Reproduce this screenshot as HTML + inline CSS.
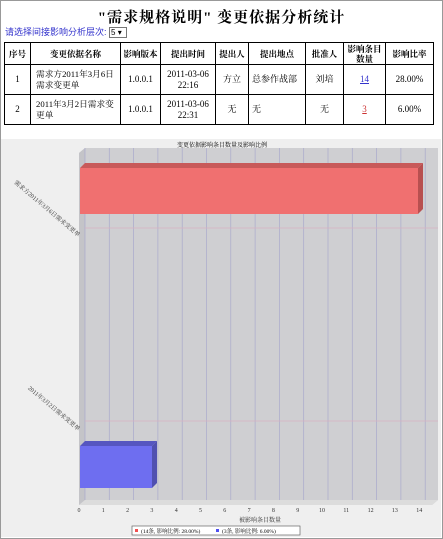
<!DOCTYPE html>
<html><head><meta charset="utf-8"><style>
body{margin:0;width:443px;height:539px;overflow:hidden;background:#fff;font-family:"Liberation Serif","Noto Serif CJK SC",serif;}
.frame{position:absolute;left:0;top:0;width:441px;height:537px;border:1px solid #999;}
h1{position:absolute;top:6px;left:0;width:443px;text-align:center;font-size:15px;font-weight:bold;margin:0;letter-spacing:1px}
.sel{position:absolute;left:5px;top:25px;font-size:9px;color:#3333cc;font-family:"Liberation Sans","Noto Sans CJK SC",sans-serif}
.sel span{display:inline-block;border:1px solid #777;color:#000;font-size:8px;padding:0 1px;width:14px;height:9px;line-height:9px;vertical-align:middle;background:#fff}
table{position:absolute;left:4px;top:42px;border-collapse:collapse;font-size:9px;table-layout:fixed;width:429px}
td{border:1px solid #000;text-align:center;padding:0 3px;line-height:11px}
th{border:1px solid #000;font-size:8.5px;height:21px;line-height:10px;padding:0}
a{color:#33c;text-decoration:underline}
</style></head><body>
<div class="frame"></div>
<h1>"需求规格说明" 变更依据分析统计</h1>
<div class="sel">请选择间接影响分析层次: <span>5 ▾</span></div>
<table>
<colgroup><col style="width:26px"><col style="width:90px"><col style="width:40px"><col style="width:55px"><col style="width:33px"><col style="width:57px"><col style="width:38px"><col style="width:42px"><col style="width:48px"></colgroup>
<tr><th>序号</th><th>变更依据名称</th><th>影响版本</th><th>提出时间</th><th>提出人</th><th>提出地点</th><th>批准人</th><th>影响条目数量</th><th>影响比率</th></tr>
<tr style="height:30px"><td>1</td><td style="text-align:left;padding:0 1px 0 5px;font-size:8.7px">需求方2011年3月6日需求变更单</td><td>1.0.0.1</td><td>2011-03-06 22:16</td><td>方立</td><td style="text-align:left">总参作战部</td><td>刘培</td><td><a>14</a></td><td>28.00%</td></tr>
<tr style="height:30px"><td>2</td><td style="text-align:left;padding:0 1px 0 5px;font-size:8.7px">2011年3月2日需求变更单</td><td>1.0.0.1</td><td>2011-03-06 22:31</td><td>无</td><td style="text-align:left">无</td><td>无</td><td><a style="color:#c33">3</a></td><td>6.00%</td></tr>
</table>
<svg style="position:absolute;left:0;top:0" width="443" height="539" font-family="Liberation Serif, Noto Serif CJK SC, serif">
<rect x="1" y="139" width="440" height="398" fill="#efefef"/>
<text x="222" y="147" font-size="6" text-anchor="middle">变更依据影响条目数量及影响比例</text>
<polygon points="79,153 85,148 438,148 438,500 432,505 79,505" fill="#cfcfd2"/>
<polygon points="79,153 85,148 85,500 79,505" fill="#c4c4c8"/>
<polygon points="79,505 85,500 438,500 432,505" fill="#dcdcdc"/>
<g stroke="#aaaacc" stroke-width="0.7">
<line x1="85" y1="148" x2="85" y2="500"/><line x1="109.3" y1="148" x2="109.3" y2="500"/><line x1="133.6" y1="148" x2="133.6" y2="500"/><line x1="157.9" y1="148" x2="157.9" y2="500"/><line x1="182.2" y1="148" x2="182.2" y2="500"/><line x1="206.5" y1="148" x2="206.5" y2="500"/><line x1="230.8" y1="148" x2="230.8" y2="500"/><line x1="255.1" y1="148" x2="255.1" y2="500"/><line x1="279.4" y1="148" x2="279.4" y2="500"/><line x1="303.7" y1="148" x2="303.7" y2="500"/><line x1="328" y1="148" x2="328" y2="500"/><line x1="352.3" y1="148" x2="352.3" y2="500"/><line x1="376.6" y1="148" x2="376.6" y2="500"/><line x1="400.9" y1="148" x2="400.9" y2="500"/><line x1="425.2" y1="148" x2="425.2" y2="500"/>
</g>
<g stroke="#d8b0c0" stroke-width="0.7"><line x1="85" y1="228" x2="438" y2="228"/><line x1="85" y1="421" x2="438" y2="421"/></g>
<polygon points="80,168 85,163 423,163 418,168" fill="#c85a5a"/>
<polygon points="418,168 423,163 423,209 418,214" fill="#b85050"/>
<rect x="80" y="168" width="338" height="46" fill="#f07070"/>
<polygon points="80,446 85,441 157,441 152,446" fill="#5656c0"/>
<polygon points="152,446 157,441 157,483 152,488" fill="#5050b0"/>
<rect x="80" y="446" width="72" height="42" fill="#6e6ef0"/>
<g font-size="6" text-anchor="middle" fill="#333">
<text x="79" y="512">0</text><text x="103.3" y="512">1</text><text x="127.6" y="512">2</text><text x="151.9" y="512">3</text><text x="176.2" y="512">4</text><text x="200.5" y="512">5</text><text x="224.8" y="512">6</text><text x="249.1" y="512">7</text><text x="273.4" y="512">8</text><text x="297.7" y="512">9</text><text x="322" y="512">10</text><text x="346.3" y="512">11</text><text x="370.6" y="512">12</text><text x="394.9" y="512">13</text><text x="419.2" y="512">14</text>
<text x="260" y="522">被影响条目数量</text>
</g>
<text font-size="6" fill="#333" text-anchor="end" transform="translate(78,237) rotate(40)">需求方2011年3月6日需求变更单</text>
<text font-size="6" fill="#333" text-anchor="end" transform="translate(78,431) rotate(40)">2011年3月2日需求变更单</text>
<rect x="132" y="526" width="168" height="9" fill="#fff" stroke="#666" stroke-width="0.7"/>
<rect x="135" y="529" width="3" height="3" fill="#f05050"/>
<text x="141" y="533" font-size="5.5">(14条, 影响比例: 28.00%)</text>
<rect x="216" y="529" width="3" height="3" fill="#5050f0"/>
<text x="222" y="533" font-size="5.5">(3条, 影响比例: 6.00%)</text>
</svg>
</body></html>
